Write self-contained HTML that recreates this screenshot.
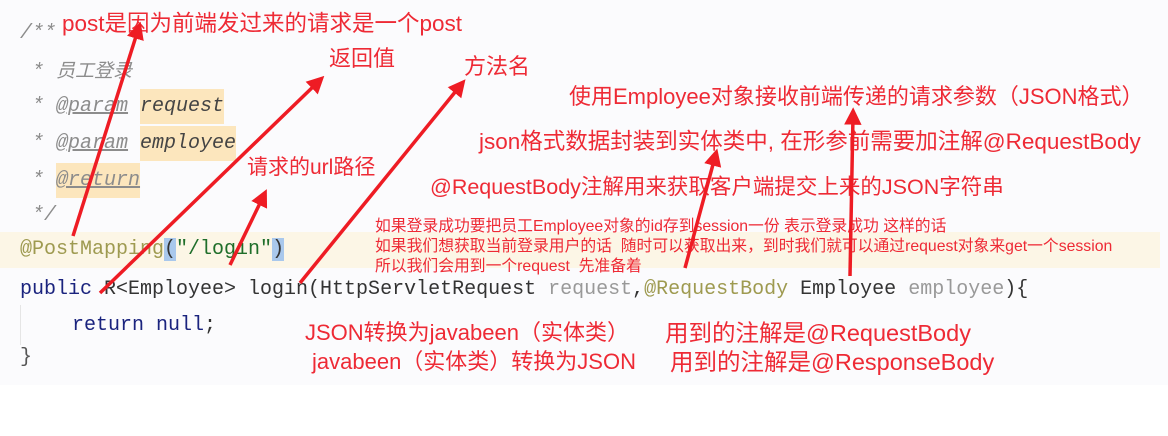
<!DOCTYPE html>
<html><head><meta charset="utf-8"><style>
body{margin:0;width:1168px;height:436px;background:#fff;position:relative;overflow:hidden}
.bg{position:absolute;left:0;top:0;width:1168px;height:385px;background:#fbfbfd}
.band{position:absolute;left:0;top:232px;width:1160px;height:36px;background:#fcf6e6}
.c{position:absolute;font-family:"Liberation Mono","Noto Sans CJK SC",monospace;font-size:20px;white-space:pre;line-height:24px}
.cm{color:#8c8c8c;font-style:italic}
.hl{background:#fce6bd}
.r{position:absolute;color:#ee2a35;font-family:"Liberation Sans","Noto Sans CJK SC",sans-serif;white-space:pre;line-height:1}
</style></head><body>
<div class="bg"></div>
<div class="band"></div>
<div class="c cm" style="left:20px;top:22px">/**</div>
<div class="c cm" style="left:32px;top:58px">* <span style="font-family:'Noto Sans CJK SC',sans-serif;font-size:19px">员工登录</span></div>
<div class="c cm" style="left:32px;top:95px">* <u>@param</u> <span class="hl" style="color:#444;padding:6px 0">request</span></div>
<div class="c cm" style="left:32px;top:132px">* <u>@param</u> <span class="hl" style="color:#444;padding:6px 0">employee</span></div>
<div class="c cm" style="left:32px;top:169px">* <span class="hl" style="padding:6px 0"><u>@return</u></span></div>
<div class="c cm" style="left:32px;top:204px">*/</div>
<div class="c" style="left:20px;top:238px;color:#9e9a50">@PostMapping<span style="background:#a9c8ec;color:#333">(</span><span style="color:#1f6e2a">"/login"</span><span style="background:#a9c8ec;color:#333">)</span></div>
<div class="c" style="left:20px;top:278px;color:#333"><span style="color:#1a237e">public</span> R&lt;Employee&gt; login(HttpServletRequest <span style="color:#999">request</span>,<span style="color:#9e9a50">@RequestBody</span> Employee <span style="color:#999">employee</span>){</div>
<div class="c" style="left:72px;top:314px;color:#1a237e">return null<span style="color:#333">;</span></div>
<div class="c" style="left:20px;top:346px;color:#555">}</div>
<div style="position:absolute;left:20px;top:305px;width:1px;height:40px;background:#e5e5e5"></div>

<div class="r" style="left:62px;top:13px;font-size:22.5px">post是因为前端发过来的请求是一个post</div>
<div class="r" style="left:329px;top:48px;font-size:22px">返回值</div>
<div class="r" style="left:464px;top:56px;font-size:22px">方法名</div>
<div class="r" style="left:569px;top:86px;font-size:22px">使用Employee对象接收前端传递的请求参数（JSON格式）</div>
<div class="r" style="left:479px;top:131px;font-size:22.5px">json格式数据封装到实体类中, 在形参前需要加注解@RequestBody</div>
<div class="r" style="left:247px;top:157px;font-size:21px">请求的url路径</div>
<div class="r" style="left:430px;top:177px;font-size:21.5px">@RequestBody注解用来获取客户端提交上来的JSON字符串</div>
<div class="r" style="left:375px;top:217px;font-size:15.8px;line-height:20px">如果登录成功要把员工Employee对象的id存到session一份 表示登录成功 这样的话
如果我们想获取当前登录用户的话  随时可以获取出来，到时我们就可以通过request对象来get一个session
所以我们会用到一个request  先准备着</div>
<div class="r" style="left:305px;top:322px;font-size:22px">JSON转换为javabeen（实体类）</div>
<div class="r" style="left:312px;top:351px;font-size:22px">javabeen（实体类）转换为JSON</div>
<div class="r" style="left:665px;top:322px;font-size:23.5px">用到的注解是@RequestBody</div>
<div class="r" style="left:670px;top:351px;font-size:23.5px">用到的注解是@ResponseBody</div>

<svg width="1168" height="436" style="position:absolute;left:0;top:0">
<defs><marker id="a" markerWidth="5" markerHeight="5" refX="2.5" refY="2.5" orient="auto" markerUnits="strokeWidth"><path d="M0,0 L5,2.5 L0,5 z" fill="#ee1c24"/></marker></defs>
<g stroke="#ee1c24" stroke-width="3.5" fill="none" marker-end="url(#a)">
<line x1="73" y1="236" x2="138" y2="30"/>
<line x1="100" y1="293" x2="318" y2="82"/>
<line x1="230" y1="265" x2="263" y2="197"/>
<line x1="300" y1="283" x2="460" y2="86"/>
<line x1="685" y1="268" x2="715" y2="157"/>
<line x1="850" y1="276" x2="853" y2="116"/>
</g></svg>
</body></html>
